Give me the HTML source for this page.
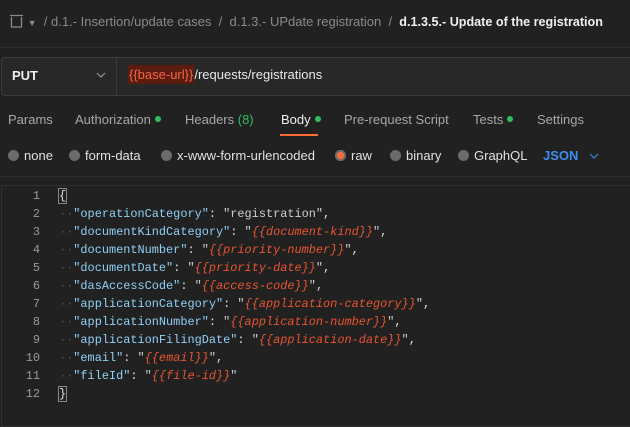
<!DOCTYPE html>
<html><head><style>
body{margin:0;width:630px;height:416px;background:#212121;overflow:hidden;font-family:"Liberation Sans",sans-serif;position:relative;color:#d0d0d0}
.a{position:absolute;white-space:nowrap}
.bc{top:14px;left:9px;font-size:13px;color:#8a8a8a}
.bc b{color:#f0f0f0;font-size:12.6px}
.url{top:57px;left:1px;right:-4px;height:37px;background:#282828;border:1px solid #3b3b3b;border-radius:4px}
.tabs{top:112px;font-size:13px;color:#a8a8a8}
.dot{display:inline-block;width:6px;height:6px;border-radius:50%;background:#2fbf61;margin-left:4px;vertical-align:2px}
.r{display:inline-block;width:11px;height:11px;border-radius:50%;background:#6b6b6b;vertical-align:-1px;margin-right:5px}
.code{font-family:"Liberation Mono",monospace;font-size:11.9px;line-height:18px}
.k{color:#8fd0f7}.v{color:#e8552f;font-style:italic}.s{color:#cfcfcf}.p{color:#e0e0e0}.i{color:#555}
</style></head><body>
<div class="a bc"><svg width="15" height="15" viewBox="0 0 15 15" style="vertical-align:-3px"><path d="M1 1.5h13M2.5 3v10h10V3" fill="none" stroke="#8a8a8a" stroke-width="1.3"/></svg> <span style="font-size:9px">▼</span> &nbsp;/ d.1.- Insertion/update cases &nbsp;/&nbsp; d.1.3.- UPdate registration &nbsp;/&nbsp; <b>d.1.3.5.- Update of the registration</b></div>
<div class="a" style="top:47px;left:0;width:630px;height:1px;background:#2f2f2f"></div>
<div class="a url"></div>
<div class="a" style="top:58px;left:116px;width:1px;height:37px;background:#3b3b3b"></div>
<div class="a" style="top:68px;left:12px;font-size:13px;font-weight:bold;color:#f0f0f0">PUT</div>
<svg class="a" style="top:72px;left:96px" width="10" height="6" viewBox="0 0 10 6"><path d="M1 1l4 4 4-4" fill="none" stroke="#999" stroke-width="1.1"/></svg>
<div class="a" style="top:67px;left:128px;font-size:13px;color:#e8e8e8"><span style="background:#5b1b0f;color:#f0684a;padding:2px 1px">{{base-url}}</span>/requests/registrations</div>
<div class="a tabs" style="left:8px">Params</div>
<div class="a tabs" style="left:75px">Authorization<span class="dot"></span></div>
<div class="a tabs" style="left:185px">Headers <span style="color:#2fbf61">(8)</span></div>
<div class="a tabs" style="left:281px;color:#f0f0f0">Body<span class="dot"></span></div>
<div class="a" style="top:134px;left:280px;width:38px;height:2px;background:#ff6c37"></div>
<div class="a tabs" style="left:344px">Pre-request Script</div>
<div class="a tabs" style="left:473px">Tests<span class="dot"></span></div>
<div class="a tabs" style="left:537px">Settings</div>
<div class="a" style="top:148px;left:8px;font-size:13px;color:#e0e0e0"><span class="r"></span>none</div>
<div class="a" style="top:148px;left:69px;font-size:13px;color:#e0e0e0"><span class="r"></span>form-data</div>
<div class="a" style="top:148px;left:161px;font-size:13px;color:#e0e0e0"><span class="r"></span>x-www-form-urlencoded</div>
<div class="a" style="top:148px;left:335px;font-size:13px;color:#e0e0e0"><span class="r" style="background:#ff6c37;box-shadow:0 0 0 2px #6b6b6b inset"></span>raw</div>
<div class="a" style="top:148px;left:390px;font-size:13px;color:#e0e0e0"><span class="r"></span>binary</div>
<div class="a" style="top:148px;left:458px;font-size:13px;color:#e0e0e0"><span class="r"></span>GraphQL</div>
<div class="a" style="top:148px;left:543px;font-size:13px;color:#3d8ef0;font-weight:bold">JSON</div>
<svg class="a" style="top:153px;left:589px" width="10" height="6" viewBox="0 0 10 6"><path d="M1 1l4 4 4-4" fill="none" stroke="#3d8ef0" stroke-width="1.1"/></svg>
<div class="a" style="top:176px;left:0;width:630px;height:1px;background:#2f2f2f"></div>
<div class="a" style="top:185px;left:1px;width:640px;height:240px;border:1px solid #2f2f2f;border-right:0"></div>
<div class="a code" style="top:187px;left:20px;width:20px;text-align:right;color:#9a9a9a">1<br>2<br>3<br>4<br>5<br>6<br>7<br>8<br>9<br>10<br>11<br>12</div>
<div class="a code" style="top:187px;left:59px"><span class="p" style="outline:1px solid #888">{</span><br>
<span class="i">··</span><span class="k">"operationCategory"</span><span class="p">:</span> <span class="s">"registration"</span><span class="p">,</span><br>
<span class="i">··</span><span class="k">"documentKindCategory"</span><span class="p">:</span> <span class="s">"</span><span class="v">{{document-kind}}</span><span class="s">"</span><span class="p">,</span><br>
<span class="i">··</span><span class="k">"documentNumber"</span><span class="p">:</span> <span class="s">"</span><span class="v">{{priority-number}}</span><span class="s">"</span><span class="p">,</span><br>
<span class="i">··</span><span class="k">"documentDate"</span><span class="p">:</span> <span class="s">"</span><span class="v">{{priority-date}}</span><span class="s">"</span><span class="p">,</span><br>
<span class="i">··</span><span class="k">"dasAccessCode"</span><span class="p">:</span> <span class="s">"</span><span class="v">{{access-code}}</span><span class="s">"</span><span class="p">,</span><br>
<span class="i">··</span><span class="k">"applicationCategory"</span><span class="p">:</span> <span class="s">"</span><span class="v">{{application-category}}</span><span class="s">"</span><span class="p">,</span><br>
<span class="i">··</span><span class="k">"applicationNumber"</span><span class="p">:</span> <span class="s">"</span><span class="v">{{application-number}}</span><span class="s">"</span><span class="p">,</span><br>
<span class="i">··</span><span class="k">"applicationFilingDate"</span><span class="p">:</span> <span class="s">"</span><span class="v">{{application-date}}</span><span class="s">"</span><span class="p">,</span><br>
<span class="i">··</span><span class="k">"email"</span><span class="p">:</span> <span class="s">"</span><span class="v">{{email}}</span><span class="s">"</span><span class="p">,</span><br>
<span class="i">··</span><span class="k">"fileId"</span><span class="p">:</span> <span class="s">"</span><span class="v">{{file-id}}</span><span class="s">"</span><br>
<span class="p" style="outline:1px solid #888">}</span></div>
</body></html>
